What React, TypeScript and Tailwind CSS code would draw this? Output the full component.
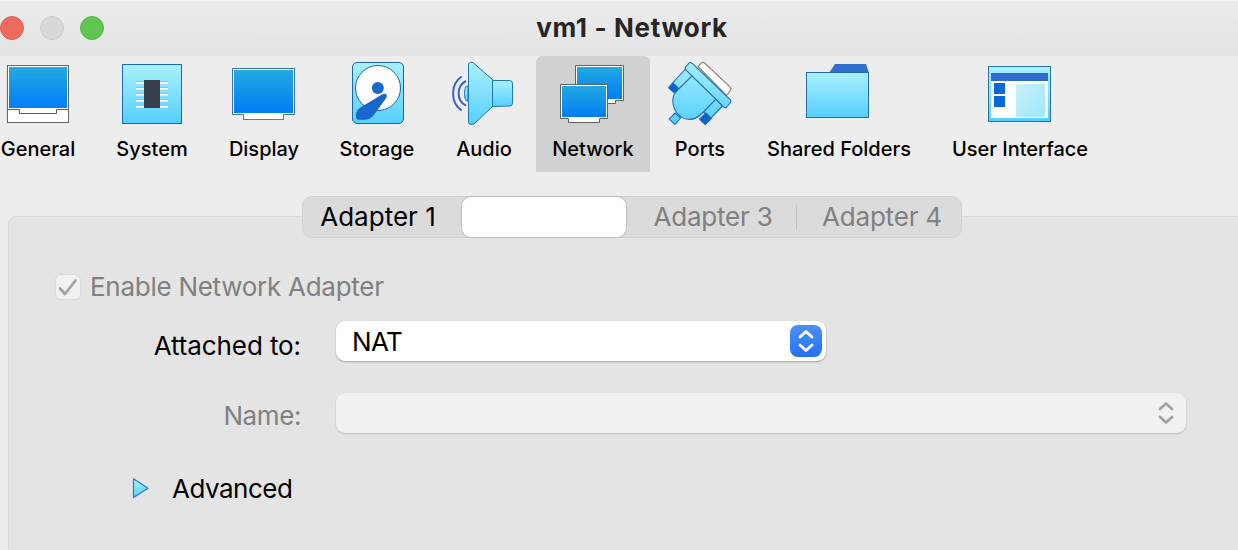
import type { ReactNode } from "react";

function Defs() {
  return (
    <svg width="0" height="0" className="absolute">
      <defs>
        <linearGradient id="screen" x1="0" y1="0" x2="0" y2="1">
          <stop offset="0" stopColor="#23a9e1" />
          <stop offset="1" stopColor="#007df5" />
        </linearGradient>
        <linearGradient id="cyan" x1="0" y1="0" x2="0" y2="1">
          <stop offset="0" stopColor="#aaf1fd" />
          <stop offset="1" stopColor="#55cffd" />
        </linearGradient>
        <linearGradient id="plug" gradientUnits="userSpaceOnUse" x1="0" y1="62" x2="0" y2="125">
          <stop offset="0" stopColor="#a4effd" />
          <stop offset="1" stopColor="#55cffd" />
        </linearGradient>
        <linearGradient id="pale" x1="0" y1="0" x2="1" y2="1">
          <stop offset="0" stopColor="#c9f2fb" />
          <stop offset="1" stopColor="#9fe4fd" />
        </linearGradient>
      </defs>
    </svg>
  );
}

const BLUE = "#1c66a8";

const general = (
  <g>
    <rect x="7.5" y="65.5" width="61" height="57" fill="#fff" stroke="#666" />
    <rect x="9" y="67" width="58" height="41" fill="url(#screen)" />
    <path d="M8 109.5H19.5V113.5H56.5V109.5H68" fill="none" stroke="#5c5c55" />
  </g>
);

const system = (
  <g>
    <rect x="122.5" y="64.5" width="59" height="59" fill="url(#cyan)" stroke="#1969b8" />
    <g fill="#8fc4d5">
      {[81, 87, 93, 99, 105].map((y) => (
        <rect key={y} x="136" y={y} width="32" height="1" />
      ))}
    </g>
    <g fill="#fff">
      {[82, 88, 94, 100, 106].map((y) => (
        <rect key={y} x="136" y={y} width="32" height="1.6" />
      ))}
    </g>
    <rect x="144" y="80" width="16" height="28" fill="#373f4d" />
  </g>
);

const display = (
  <g>
    <path d="M232.5 68.5H294.5V114.5H283.5V119.5H243.5V114.5H232.5Z" fill="#fff" stroke="#39719b" />
    <path d="M243.5 115V119.5H283.5V115" fill="none" stroke="#77756b" />
    <rect x="234" y="70" width="59" height="43" fill="url(#screen)" />
  </g>
);

const storage = (
  <g>
    <rect x="352.5" y="62.5" width="51" height="61" rx="4.5" fill="url(#cyan)" stroke={BLUE} />
    <circle cx="378" cy="88" r="22.5" fill="#fff" stroke={BLUE} />
    <circle cx="377.8" cy="88" r="6" fill="#1767cc" />
    <path
      d="M381.5 94.8Q385 93 386.5 94.5Q387.4 95.8 386.2 98L375 113.5Q371 119.8 364 119.8H358.5Q356 119.5 356 117V113.5Q356.5 110 360 107.8Z"
      fill="#1767cc"
    />
  </g>
);

const audio = (
  <g stroke="#2176ab" strokeLinejoin="round">
    <path d="M468 86H466.5Q464.5 87 464.5 93.5T466.5 101H468Z" fill="url(#cyan)" />
    <path d="M468.5 63.5Q470 61.5 473 62.7L493 80V106L474 124Q470.5 125.5 468.5 123Z" fill="url(#cyan)" />
    <path d="M492.5 80.5H509.5Q512.5 80.5 512.5 83.5V103Q512.5 106 509.5 106L492.5 106.5Z" fill="url(#cyan)" />
    <path d="M461.7 76.5C450.2 84 450.2 103 461.7 110.5" fill="none" stroke="#3e5ec9" strokeWidth="2" />
    <path d="M466 81C456.2 86 456.2 101 466 105.5" fill="none" stroke="#3e5ec9" strokeWidth="2" />
  </g>
);

const network = (
  <g>
    <path d="M575.5 65.5H623.5V100.5H615.5V103.5H585.5V100.5H575.5Z" fill="#fff" stroke="#646260" />
    <rect x="577" y="67" width="45" height="32" fill="url(#screen)" />
    <path d="M560.5 84.5H607.5V118.5H599.5V122.5H568.5V118.5H560.5Z" fill="#fff" stroke="#646260" />
    <rect x="562" y="86" width="44" height="31" fill="url(#screen)" />
  </g>
);

const ports = (
  <g stroke="#216eb7" strokeWidth="1.1" strokeLinejoin="round">
    <path d="M698 66.5L701.5 62.8Q703 61.8 704.5 63L730.3 87.2Q731.5 88.6 730.7 89.8L726.5 95.5Z" fill="#fff" stroke="#917c68" />
    <path d="M675 113L680.7 118L675 124.5L669.2 119.2Z" fill="url(#plug)" />
    <path d="M685.5 69L692.5 75.7L679 89L672.7 82.9Z" fill="url(#plug)" />
    <path d="M672.7 82.9L679 89L674.5 93L668.5 87.8Z" fill="#0b62d3" />
    <path d="M715.5 98.7L722.5 106L710.5 118.5L703.5 112Z" fill="url(#plug)" />
    <path d="M706 113L711.3 118.5L705.2 124.7L699.5 119.2Z" fill="#0b62d3" />
    <path
      d="M692 75.8L716 98.8L702 113.5C697 118.5 692 119.6 688 119.3C679.5 119 672.8 109.5 672.8 101C672.8 96.5 674 93.5 676.5 91.3Z"
      fill="url(#plug)"
    />
    <path d="M685.6 69.6Q684.7 68.4 685.5 67L688.8 63.3Q690.3 61.8 692 63.2L730.4 99.8Q731.5 101.2 730.4 102.7L726.8 107Q725.5 108.3 724 107.1Z" fill="url(#plug)" />
  </g>
);

const folders = (
  <g>
    <path d="M829 73L835 64H866L869 73Z" fill="#2f70cf" />
    <rect x="806.5" y="72.5" width="62" height="45" fill="url(#cyan)" stroke="#276ca7" />
  </g>
);

const userInterface = (
  <g>
    <rect x="988.5" y="66.5" width="62" height="55" fill="url(#cyan)" stroke="#29729e" />
    <rect x="991" y="81" width="57" height="37" fill="#fff" />
    <rect x="991" y="73" width="57" height="8" fill="#2c6dce" />
    <rect x="994" y="83" width="11" height="11" fill="#0868d6" />
    <rect x="994" y="96" width="11" height="11" fill="#0868d6" />
    <rect x="1016" y="84" width="29" height="33" fill="url(#pale)" />
  </g>
);

type Tool = { label: string; origin: number; box: string; art: ReactNode };

const tools: Tool[] = [
  { label: "General", origin: 2, box: "w-[76px]", art: general },
  { label: "System", origin: 116, box: "w-[152px]", art: system },
  { label: "Display", origin: 228, box: "w-[72px]", art: display },
  { label: "Storage", origin: 341, box: "ml-[37px] w-20", art: storage },
  { label: "Audio", origin: 448, box: "ml-[27px] w-20", art: audio },
  { label: "Network", origin: 557, box: "ml-3 w-[114px] rounded-t-md bg-[#d1d1d1]", art: network },
  { label: "Ports", origin: 664, box: "w-[100px]", art: ports },
  { label: "Shared Folders", origin: 803, box: "w-[178px]", art: folders },
  { label: "User Interface", origin: 984, box: "w-[184px]", art: userInterface },
];

function Chevrons({ className }: { className: string }) {
  return (
    <svg width="32" height="32" viewBox="0 0 32 32" fill="none" strokeWidth="2.8" strokeLinecap="round" strokeLinejoin="round" className={className}>
      <path d="M10 12L16 6.5L22 12M10 20L16 25.5L22 20" stroke="currentColor" />
    </svg>
  );
}

export default function App() {
  return (
    <div className="flex h-[550px] w-[1238px] flex-col overflow-hidden bg-[#ededed] font-['Inter','Liberation_Sans',sans-serif] text-black">
      <Defs />
      <header className="grid h-14 shrink-0 grid-cols-[104px_1056px_1fr] items-center border-t border-[#f5f5f5] bg-linear-to-b from-[#ececec] to-[#e3e3e3] pb-0.5">
        <div className="flex gap-4">
          <span className="size-6 rounded-full border border-[#de6259] bg-[#ef6a5e]" />
          <span className="size-6 rounded-full border border-[#cbcbcb] bg-[#d8d8d8]" />
          <span className="size-6 rounded-full border border-[#58b64b] bg-[#5fc652]" />
        </div>
        <h1 className="text-center text-[26px] leading-8 font-bold tracking-[0.65px] text-[#262626]">vm1 - Network</h1>
      </header>

      <nav className="flex h-[116px] shrink-0">
        {tools.map((t) => (
          <div key={t.label} className={`flex shrink-0 flex-col items-center pt-0.5 ${t.box}`}>
            <svg width="72" height="72" viewBox={`${t.origin} 58 72 72`}>
              {t.art}
            </svg>
            <span className="mt-[7px] text-[20px] leading-6 font-medium whitespace-nowrap">{t.label}</span>
          </div>
        ))}
      </nav>

      <main className="mt-11 ml-2 flex grow flex-col rounded-tl-lg border-t border-l border-[#d9d9d9] bg-[#e4e4e4] text-[26px] leading-8">
        <div className="-mt-[21px] ml-[293px] flex h-[42px] w-[660px] shrink-0 items-center rounded-[10px] border border-[#d2d2d2] bg-[#dbdbdb]">
          <span className="w-[159px] pr-[9px] text-center whitespace-nowrap">Adapter 1</span>
          <span className="h-10 w-[164px] rounded-[9px] bg-white shadow-[0_0_1px_1px_rgba(0,0,0,0.12)]" />
          <span className="w-[170px] pl-1 text-center tracking-[-0.2px] whitespace-nowrap text-[#808080]">Adapter 3</span>
          <span className="h-6 w-px bg-[#c2c2c2]" />
          <span className="grow pl-1.5 text-center tracking-[-0.2px] whitespace-nowrap text-[#808080]">Adapter 4</span>
        </div>

        <div className="mt-[33px] ml-[47px] flex h-8 items-center">
          <span className="flex size-6 items-center justify-center rounded-[5px] bg-[#f1f1f1] shadow-[0_0_2px_rgba(0,0,0,0.12)]">
            <svg width="24" height="24" viewBox="0 0 24 24" fill="none">
              <path d="M4 13.5L9 19L19.5 5.5" stroke="#a2a2a2" strokeWidth="2.8" strokeLinecap="round" strokeLinejoin="round" />
            </svg>
          </span>
          <span className="ml-2.5 tracking-[-0.27px] text-[#808080]">Enable Network Adapter</span>
        </div>

        <div className="mt-[17px] flex h-[42px] items-center">
          <span className="w-[292px] pt-2.5 text-right tracking-[-0.1px]">Attached to:</span>
          <div className="ml-[35px] flex h-10 w-[490px] items-center justify-between rounded-[9px] bg-white pr-1 pl-4 shadow-[0_1px_2px_rgba(0,0,0,0.3)]">
            <span className="pt-0.5 tracking-[-0.6px]">NAT</span>
            <Chevrons className="rounded-[8px] bg-linear-to-b from-[#4c8ff5] to-[#2371f2] text-white" />
          </div>
        </div>

        <div className="mt-[30px] flex h-[42px] items-center">
          <span className="w-[292px] pt-1.5 text-right tracking-[-0.4px] text-[#808080]">Name:</span>
          <div className="ml-[35px] flex h-10 w-[850px] items-center justify-end rounded-[9px] bg-[#f1f1f1] pr-1 shadow-[0_1px_2px_rgba(0,0,0,0.18)]">
            <Chevrons className="text-[#a3a3a3]" />
          </div>
        </div>

        <div className="mt-[39px] ml-[123px] flex h-8 items-center">
          <svg width="18" height="24" viewBox="0 0 18 24">
            <path d="M1.5 1.8L16 11.2L1.5 20.5Z" fill="url(#cyan)" stroke="#247fb5" strokeLinejoin="round" strokeWidth="1.2" />
          </svg>
          <span className="ml-[22px] tracking-[-0.5px]">Advanced</span>
        </div>
      </main>
    </div>
  );
}
